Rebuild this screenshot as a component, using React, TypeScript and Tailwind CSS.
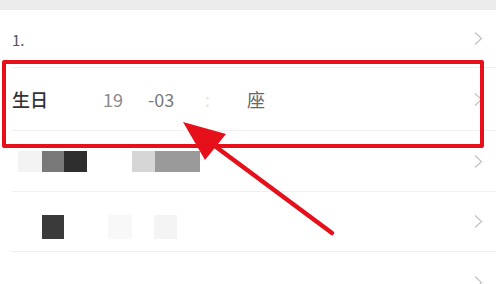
const font = { fontFamily: '"Noto Sans CJK SC", "Noto Sans", sans-serif' }

function Chevron() {
  return (
    <svg width="10" height="15" viewBox="0 0 10 15" className="shrink-0">
      <polyline points="2,1.5 8.5,7.5 2,13.5" fill="none" stroke="#c2c2c2" strokeWidth="1.2" />
    </svg>
  )
}

function Divider() {
  return <div className="ml-3 h-px w-[484px] bg-[#efefef]" />
}

export default function App() {
  return (
    <div className="relative h-[284px] w-[503px] overflow-hidden bg-white" style={font}>
      <div className="h-[10px] w-[496px] bg-[#ebebeb]" />

      {/* row 1 */}
      <div className="flex h-[57px] w-[496px] items-center pl-3 pr-[13px]">
        <span className="flex-1 pt-[4px] text-[15px] text-[#555]">1.</span>
        <Chevron />
      </div>
      <Divider />

      {/* row 2: birthday */}
      <div className="flex h-[62px] w-[496px] items-center pl-3 pr-[13px]">
        <span className="w-[91px] text-[18px] font-medium text-[#333]">生日</span>
        <span className="w-[45px] text-[18px] text-[#8a8a8a]">19</span>
        <span className="w-[57px] text-[18px] text-[#7a7a7a]">-03</span>
        <span className="w-[42px] text-[18px] text-[#e4e4e4]">:</span>
        <span className="flex-1 text-[18px] text-[#666]">座</span>
        <Chevron />
      </div>
      <Divider />

      {/* row 3: blurred */}
      <div className="flex h-[60px] w-[496px] items-center pl-[18px] pr-[13px]">
        <div className="flex flex-1 items-center">
          <div className="h-[21px] w-[24px] bg-[#f3f3f3]" />
          <div className="h-[21px] w-[22px] bg-[#787878]" />
          <div className="h-[21px] w-[23px] bg-[#2e2e2e]" />
          <div className="ml-[45px] h-[21px] w-[23px] bg-[#d6d6d6]" />
          <div className="h-[21px] w-[45px] bg-[#9a9a9a]" />
        </div>
        <Chevron />
      </div>
      <Divider />

      {/* row 4: blurred */}
      <div className="flex h-[59px] w-[496px] items-center pl-[42px] pr-[13px]">
        <div className="flex flex-1 items-center pt-[10px]">
          <div className="h-[24px] w-[22px] bg-[#3a3a3a]" />
          <div className="ml-[44px] h-[24px] w-[24px] bg-[#f8f8f8]" />
          <div className="ml-[22px] h-[24px] w-[23px] bg-[#f4f4f4]" />
        </div>
        <Chevron />
      </div>
      <Divider />

      {/* row 5 */}
      <div className="flex h-[60px] w-[496px] items-center pl-3 pr-[13px]">
        <span className="flex-1" />
        <Chevron />
      </div>

      {/* annotation overlay */}
      <div className="absolute left-[2px] top-[60px] h-[88px] w-[482px] rounded-[2px] border-4 border-[#e6101b]" />
      <svg className="absolute left-0 top-0" width="503" height="284" viewBox="0 0 503 284">
        <line x1="332" y1="233" x2="200" y2="135" stroke="#e6101b" strokeWidth="4.5" strokeLinecap="round" />
        <polygon points="183,122 226,134 205,160" fill="#e6101b" />
      </svg>
    </div>
  )
}
